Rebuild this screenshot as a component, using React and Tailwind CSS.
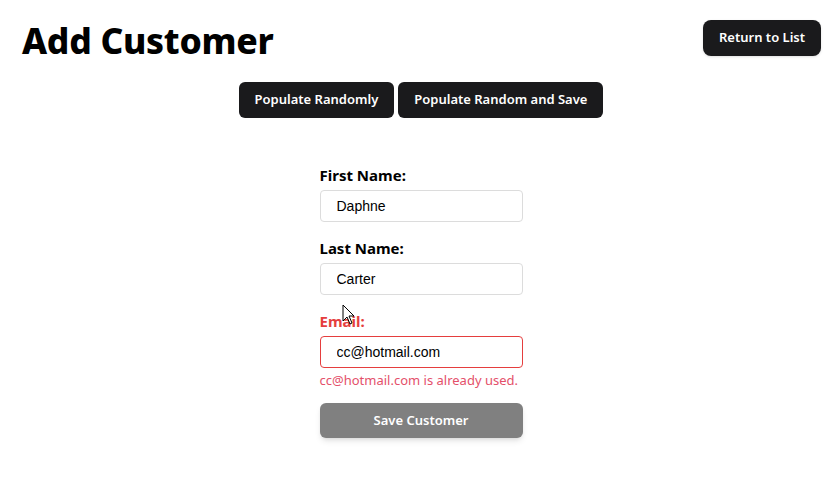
import React from 'react';

function Field({ label, value, error }) {
  return (
    <div className="flex flex-col">
      <label className={`text-[15px] font-bold leading-6 ${error ? 'text-[#e53e3e]' : 'text-black'}`}>
        {label}
      </label>
      <input
        readOnly
        value={value}
        className={`mt-[3px] h-8 w-[203px] rounded border bg-white px-4 font-['Liberation_Sans',sans-serif] text-sm text-black outline-none ${
          error ? 'border-[#e53e3e]' : 'border-[#dcdcdc]'
        }`}
      />
      {error && (
        <p className="mt-[2px] whitespace-nowrap text-[13px] leading-5 text-[#e4506a]">{error}</p>
      )}
    </div>
  );
}

export default function App() {
  return (
    <div className="relative min-h-screen bg-white font-['Noto_Sans','Open_Sans',sans-serif] text-black">
      {/* Header */}
      <div className="flex items-start justify-between pl-[22px] pr-[15px] pt-5">
        <h1 className="text-[35.5px] font-extrabold leading-[40px] tracking-[-0.3px]">Add Customer</h1>
        <button className="h-9 rounded-lg bg-[#1a1a1c] px-4 text-[13px] font-semibold text-white shadow-sm">
          Return to List
        </button>
      </div>

      {/* Populate actions */}
      <div className="mt-[22px] flex justify-center gap-1 pl-[6px]">
        <button className="h-9 rounded-md bg-[#1a1a1c] px-4 text-[13px] font-semibold text-white">
          Populate Randomly
        </button>
        <button className="h-9 rounded-md bg-[#1a1a1c] px-4 text-[13px] font-semibold text-white">
          Populate Random and Save
        </button>
      </div>

      {/* Form */}
      <div className="mt-[45px] flex justify-center pl-[6px]">
        <div className="flex w-[203px] flex-col gap-[14px]">
          <Field label="First Name:" value="Daphne" />
          <Field label="Last Name:" value="Carter" />
          <Field label="Email:" value="cc@hotmail.com" error="cc@hotmail.com is already used." />
          <button className="mt-[-1px] h-[35px] w-[203px] rounded-md bg-[#808080] text-[13px] font-semibold text-white shadow-md">
            Save Customer
          </button>
        </div>
      </div>

      {/* Mouse pointer */}
      <svg className="absolute left-[342px] top-[304px]" width="14" height="22" viewBox="0 0 14 22">
        <path d="M1 1 L1 17 L5 13 L8 20 L10 19 L7 12 L12 12 Z" fill="white" stroke="black" strokeWidth="1" strokeLinejoin="round" />
      </svg>
    </div>
  );
}
